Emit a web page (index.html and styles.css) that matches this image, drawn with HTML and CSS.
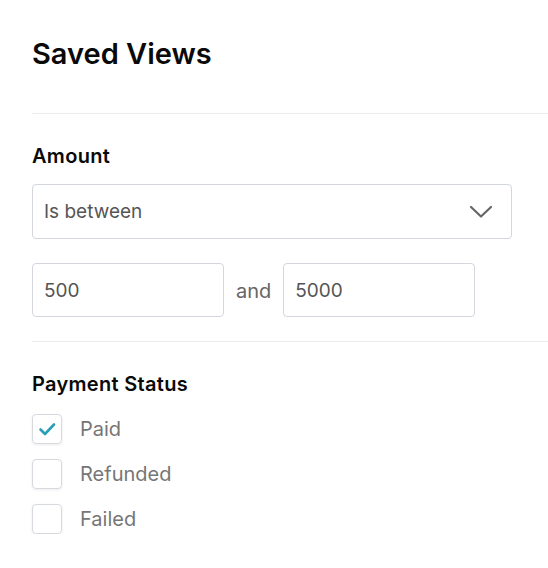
FILE: index.html
```html
<!DOCTYPE html>
<html>
<head>
<meta charset="utf-8">
<link rel="stylesheet" href="styles.css">
</head>
<body>
<div class="panel">
  <h1 class="title">Saved Views</h1>
  <hr class="divider">
  <section class="group">
    <h2 class="label">Amount</h2>
    <div class="select">
      <span>Is between</span>
      <svg class="chev" width="24" height="14" viewBox="0 0 24 14"><path d="M2 2 L12 11.5 L22 2" fill="none" stroke="#666" stroke-width="2.2" stroke-linecap="round" stroke-linejoin="round"/></svg>
    </div>
    <div class="range">
      <div class="input">500</div>
      <span class="and">and</span>
      <div class="input">5000</div>
    </div>
  </section>
  <hr class="divider">
  <section class="group">
    <h2 class="label">Payment Status</h2>
    <ul class="checks">
      <li><span class="box"><svg width="20" height="20" viewBox="0 0 20 20"><path d="M3.5 10.5 L8 15 L17 5.5" fill="none" stroke="#2a9fb8" stroke-width="2.6" stroke-linecap="round" stroke-linejoin="round"/></svg></span>Paid</li>
      <li><span class="box"></span>Refunded</li>
      <li><span class="box"></span>Failed</li>
    </ul>
  </section>
</div>
</body>
</html>
```
FILE: styles.css
```css
* { box-sizing: border-box; }
html, body { margin: 0; padding: 0; background: #fff; }
body { font-family: Inter, "Noto Sans", sans-serif; }
.panel { padding: 34px 0 0 32px; }
.title { margin: 0; font-size: 29px; font-weight: 600; color: #0a0a0a; line-height: 40px; letter-spacing: 0; }
.divider { border: 0; border-top: 1px solid #ebebeb; margin: 39px 0 0 0; }
.group { padding-top: 30px; }
.group + .divider { margin-top: 24px; }
.label { margin: 0; font-size: 20px; font-weight: 600; color: #0a0a0a; line-height: 24px; letter-spacing: 0.3px; }
.select { margin-top: 16px; width: 480px; height: 55px; border: 1px solid #d3d7dd; border-radius: 4px; display: flex; align-items: center; justify-content: space-between; padding: 0 18px 0 11px; font-size: 19px; color: #555; }
.chev { display: block; }
.range { margin-top: 24px; display: flex; align-items: center; gap: 12px; }
.input { width: 192px; height: 54px; border: 1px solid #d3d7dd; border-radius: 4px; display: flex; align-items: center; padding-left: 11px; font-size: 19px; color: #555; }
.and { font-size: 20px; color: #666; padding-top: 1px; }
.checks { list-style: none; margin: 18px 0 0 0; padding: 0; display: flex; flex-direction: column; gap: 15px; }
.checks li { display: flex; align-items: center; gap: 18px; font-size: 20px; color: #767676; height: 30px; }
.box { width: 30px; height: 30px; border: 1px solid #d6d9de; border-radius: 4px; box-shadow: 0 1px 3px rgba(0,0,0,0.08); display: flex; align-items: center; justify-content: center; }
.box svg { display: block; }
```
